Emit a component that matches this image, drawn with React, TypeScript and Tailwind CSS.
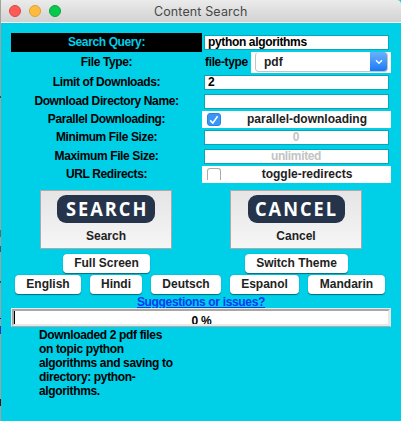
import type { ReactNode } from "react";

function Row({ label, h, dark = false, children }: { label: string; h: string; dark?: boolean; children: ReactNode }) {
  return (
    <div className={`flex ${h}`}>
      <div className={`flex w-[191px] shrink-0 items-center justify-center pb-[2px] tracking-[-0.38px] ${dark ? "bg-black text-[#00cfe8]" : ""}`}>
        {label}
      </div>
      {children}
    </div>
  );
}

function Field({ value = "", muted = false }: { value?: string; muted?: boolean }) {
  return (
    <div className={`ml-[2px] mt-[2px] flex h-[15px] w-[185px] items-center border border-[#0aa3b8] bg-white px-[3px] leading-[13px] tracking-[-0.35px] ${muted ? "justify-center pr-[4px] text-[#c3c3c3]" : ""}`}>
      {value}
    </div>
  );
}

function Toggle({ label, checked = false }: { label: string; checked?: boolean }) {
  return (
    <div className="flex h-[17px] w-[189px] overflow-hidden bg-white text-[#222]">
      <div className={`ml-[5px] mt-[2px] flex w-[14px] shrink-0 items-center justify-center border ${checked ? "h-[13px] rounded-[3px] border-[#2385ea] bg-[#3a96f4]" : "h-[12px] rounded-t-[3px] border-b-0 border-[#aaa]"}`}>
        {checked && (
          <svg width="10" height="10" viewBox="0 0 10 10" fill="none" stroke="white" strokeWidth="1.6">
            <path d="M1.2 5.4 L3.8 8.1 L8.6 1.3" />
          </svg>
        )}
      </div>
      <div className="ml-[2px] flex-1 text-center leading-[16px]">{label}</div>
    </div>
  );
}

function ImageButton({ art, label, w }: { art: string; label: string; w: string }) {
  return (
    <button className="flex h-[59px] w-[132px] flex-col items-center border border-[#aaa] bg-linear-to-b from-[#e5e5e5] to-[#f6f6f6] pt-[4px] text-[#222]">
      <span className={`flex h-[28px] items-center justify-center rounded-[9px] bg-[#25344b] ${w}`}>
        <span className="scale-x-[0.91] pl-[2px] font-['Open_Sans',sans-serif] text-[20px] leading-[28px] font-bold tracking-[2.2px] text-white">{art}</span>
      </span>
      <span className="mt-[6px] leading-[14px]">{label}</span>
    </button>
  );
}

function SmallButton({ w, children }: { w: string; children: ReactNode }) {
  return (
    <button className={`h-[19px] shrink-0 rounded-[4px] bg-white text-center leading-[19px] text-[#222] shadow-[0_0.5px_1px_#006d7d] ${w}`}>{children}</button>
  );
}

export default function App() {
  return (
    <div className="flex h-[421px] w-[401px] overflow-hidden bg-[#00cfe8] font-['Liberation_Sans',Arial,sans-serif] text-[12px] font-bold text-black">
      {/* sliver of the desktop behind the window */}
      <div className="flex w-px shrink-0 flex-col bg-[#a3a09e]">
        <i className="mt-[96px] h-[2px] bg-[#444]" />
        <i className="mt-[132px] h-[7px] bg-[#666]" />
        <i className="mt-[9px] h-[6px] bg-[#456]" />
        <i className="mt-[29px] h-[2px] bg-[#355]" />
        <i className="mt-[35px] h-px bg-[#00c]" />
        <i className="mt-[7px] h-[8px] bg-[#3a2ba8]" />
        <i className="mt-[65px] h-[7px] bg-[#500]" />
      </div>
      <div className="w-[400px]">
        <header className="flex h-[23px] items-center rounded-tr-[4px] border-b border-white bg-linear-to-b from-[#ebebeb] to-[#d2d2d2] pl-[8px]">
          <div className="flex w-[52px] shrink-0 justify-between">
            <i className="h-[12px] w-[12px] rounded-full border border-[#e2463f] bg-[#fc5b57]" />
            <i className="h-[12px] w-[12px] rounded-full border border-[#e1a032] bg-[#fdbc40]" />
            <i className="h-[12px] w-[12px] rounded-full border border-[#05a63c] bg-[#05ca4c]" />
          </div>
          <h1 className="ml-[93px] whitespace-nowrap pt-[2px] font-['Inter',sans-serif] text-[12.5px] font-normal leading-[20px] tracking-[0.12px] text-[#484848]">Content Search</h1>
        </header>
        <main className="flex flex-col pl-[10px] pt-[10px]">
          <Row label="Search Query:" h="h-[19px]" dark><Field value="python algorithms" /></Row>
          <Row label="File Type:" h="h-[21px]">
            <span className="ml-[3px] w-[46px] shrink-0 whitespace-nowrap leading-[20px] tracking-[-0.35px]">file-type</span>
            <div className="h-[21px] w-[140px] bg-white pl-[4px] pr-[3px]">
              <div className="flex h-[20px] items-stretch overflow-hidden rounded-[4px] border border-t-0 border-[#c4c4c4] pl-[8px] text-[#222]">
                <span className="flex-1 leading-[20px]">pdf</span>
                <span className="-mr-px flex w-[18px] items-center justify-center bg-linear-to-b from-[#69b1fa] to-[#1479f5]">
                  <svg width="8" height="6" viewBox="0 0 8 6" fill="none" stroke="white" strokeWidth="1.5"><path d="M1 1.2 L4 4.2 L7 1.2" /></svg>
                </span>
              </div>
            </div>
          </Row>
          <Row label="Limit of Downloads:" h="h-[19px]"><Field value="2" /></Row>
          <Row label="Download Directory Name:" h="h-[19px]"><Field /></Row>
          <Row label="Parallel Downloading:" h="h-[17px]"><Toggle label="parallel-downloading" checked /></Row>
          <Row label="Minimum File Size:" h="h-[19px]"><Field value="0" muted /></Row>
          <Row label="Maximum File Size:" h="h-[19px]"><Field value="unlimited" muted /></Row>
          <Row label="URL Redirects:" h="h-[17px]"><Toggle label="toggle-redirects" /></Row>
          <div className="ml-[29px] mt-[7px] flex gap-[58px]">
            <ImageButton art="SEARCH" label="Search" w="w-[98px]" />
            <ImageButton art="CANCEL" label="Cancel" w="w-[97px]" />
          </div>
          <div className="ml-[52px] mt-[5px] flex gap-[95px]">
            <SmallButton w="w-[87px]">Full Screen</SmallButton>
            <SmallButton w="w-[103px]">Switch Theme</SmallButton>
          </div>
          <div className="ml-[4px] mt-[2px] flex gap-[9px]">
            <SmallButton w="w-[66px]">English</SmallButton>
            <SmallButton w="w-[52px]">Hindi</SmallButton>
            <SmallButton w="w-[70px]">Deutsch</SmallButton>
            <SmallButton w="w-[69px]">Espanol</SmallButton>
            <SmallButton w="w-[77px]">Mandarin</SmallButton>
          </div>
          <a className="h-[14px] w-[380px] text-center leading-[17px] tracking-[-0.33px] text-[#0838f5] underline">Suggestions or issues?</a>
          <div className="h-[19px] w-[380px] border border-[#e8e8e8] border-b-[#aaa]">
            <div className="h-[17px] overflow-hidden border-2 border-[#a8a8a8] border-r-[#e8e8e8] border-b-[#e8e8e8] bg-white">
              <div className="h-[13px] overflow-hidden border-l border-black pt-[1px] text-center leading-[19px] tracking-[-0.2px]">0 %</div>
            </div>
          </div>
          <p className="ml-[28px] mt-[1px] w-[145px] whitespace-nowrap leading-[14px] tracking-[-0.35px]">
            Downloaded 2 pdf files<br />on topic python<br />algorithms and saving to<br />directory: python-<br />algorithms.
          </p>
        </main>
      </div>
    </div>
  );
}
